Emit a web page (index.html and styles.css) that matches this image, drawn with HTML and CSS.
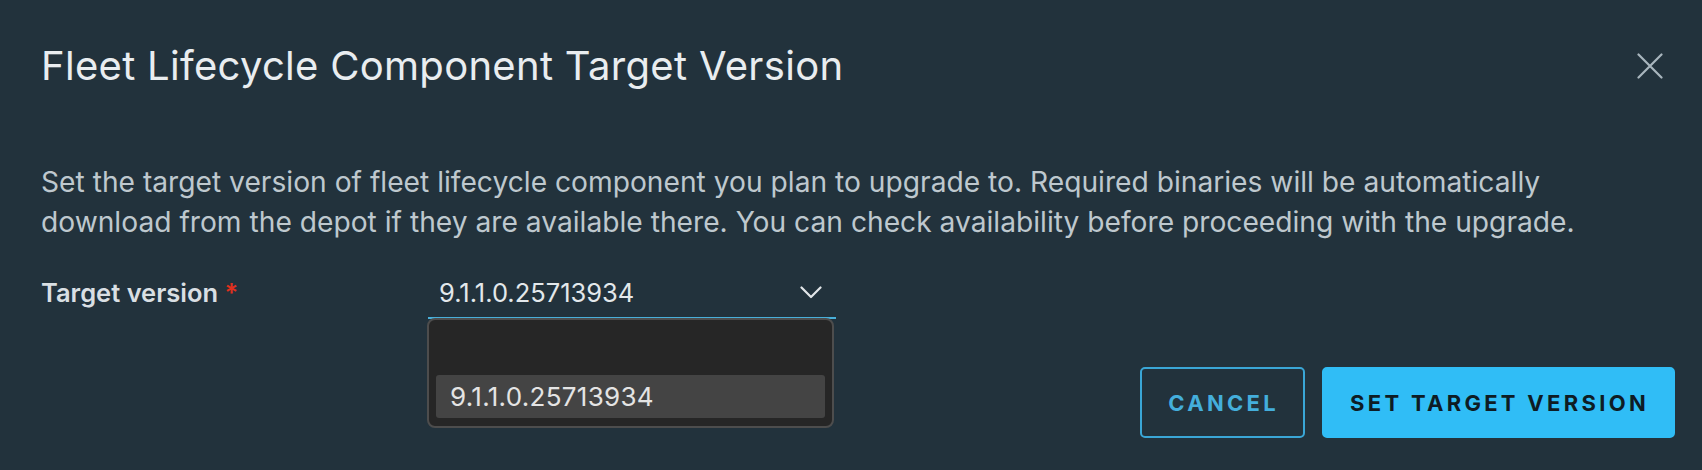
FILE: index.html
```html
<!DOCTYPE html>
<html lang="en">
<head>
<meta charset="utf-8">
<title>Fleet Lifecycle Component Target Version</title>
<link rel="stylesheet" href="styles.css">
</head>
<body>
<div class="modal">
  <header class="modal-header">
    <h1 class="title">Fleet Lifecycle Component Target Version</h1>
    <button class="close" aria-label="Close">
      <svg viewBox="0 0 26 26" width="26" height="26"><path d="M1.5 1.5 L24.5 24.5 M24.5 1.5 L1.5 24.5" stroke="currentColor" stroke-width="2.2" stroke-linecap="round" fill="none"/></svg>
    </button>
  </header>
  <p class="desc">Set the target version of fleet lifecycle component you plan to upgrade to. Required binaries will be automatically download from the depot if they are available there. You can check availability before proceeding with the upgrade.</p>
  <div class="form-row">
    <label class="label">Target version <span class="req">*</span></label>
    <div class="select-wrap">
      <div class="select">
        <span class="value">9.1.1.0.25713934</span>
        <svg class="chevron" viewBox="0 0 22 13" width="22" height="13"><path d="M1.5 1.5 L11 11 L20.5 1.5" stroke="currentColor" stroke-width="2.2" fill="none" stroke-linecap="round" stroke-linejoin="round"/></svg>
      </div>
      <div class="dropdown">
        <div class="opt-blank"></div>
        <div class="opt selected">9.1.1.0.25713934</div>
      </div>
    </div>
  </div>
  <div class="footer">
    <button class="btn btn-outline">Cancel</button>
    <button class="btn btn-primary">Set Target Version</button>
  </div>
</div>
</body>
</html>
```
FILE: styles.css
```css
* { box-sizing: border-box; }
html, body { margin: 0; padding: 0; }
body {
  background: #22323c;
  font-family: "Inter", "Lato", sans-serif;
  width: 1702px;
  height: 470px;
  overflow: hidden;
}
.modal {
  padding: 0 27px 0 41px;
}
.modal-header {
  display: flex;
  align-items: center;
  justify-content: space-between;
  padding-top: 43px;
  height: 89px;
}
.title {
  margin: 0;
  font-size: 40px;
  line-height: 46px;
  font-weight: 400;
  letter-spacing: 0.3px;
  color: #e9edf0;
}
.close {
  background: none;
  border: 0;
  padding: 0;
  margin-right: 12px;
  width: 26px;
  height: 26px;
  color: #a9b6be;
  display: flex;
}
.desc {
  margin: 73px 0 0;
  max-width: 1565px;
  font-size: 28.2px;
  line-height: 40px;
  color: #bec8ce;
}
.form-row {
  display: flex;
  align-items: flex-start;
  margin-top: 31px;
}
.label {
  width: 387px;
  flex: none;
  font-size: 25.5px;
  line-height: 39px;
  font-weight: 600;
  color: #d9dfe3;
}
.req { color: #e0301e; }
.select-wrap {
  position: relative;
  width: 408px;
}
.select {
  display: flex;
  align-items: center;
  justify-content: space-between;
  height: 46px;
  padding: 0 14px 5px 11px;
  border-bottom: 2px solid #49afd9;
}
.value {
  font-size: 25.5px;
  color: #e3e8eb;
}
.chevron { color: #e2e6e9; }
.dropdown {
  position: absolute;
  top: calc(100% - 1px);
  left: -1px;
  width: 407px;
  height: 110px;
  background: #262626;
  border: 2px solid #4d4d4d;
  border-radius: 8px;
  padding: 0 7px 8px;
  display: flex;
  flex-direction: column;
}
.opt-blank { height: 55px; flex: none; }
.opt {
  height: 43px;
  display: flex;
  align-items: center;
  padding-left: 14px;
  font-size: 26px;
  letter-spacing: 0.3px;
  color: #e4e4e4;
  border-radius: 3px;
}
.opt.selected { background: #444444; }
.footer {
  display: flex;
  justify-content: flex-end;
  gap: 17px;
  margin-top: 48px;
}
.btn {
  height: 71px;
  border-radius: 5px;
  font-family: "Inter", "Lato", sans-serif;
  font-size: 22px;
  font-weight: 700;
  letter-spacing: 3.3px;
  text-transform: uppercase;
  cursor: pointer;
  padding: 0 24px 0 26px;
}
.btn-outline {
  background: transparent;
  border: 2px solid #3aa6d6;
  color: #44aedb;
}
.btn-primary {
  background: #30bdf6;
  border: 2px solid #30bdf6;
  color: #0e1c24;
}
```
